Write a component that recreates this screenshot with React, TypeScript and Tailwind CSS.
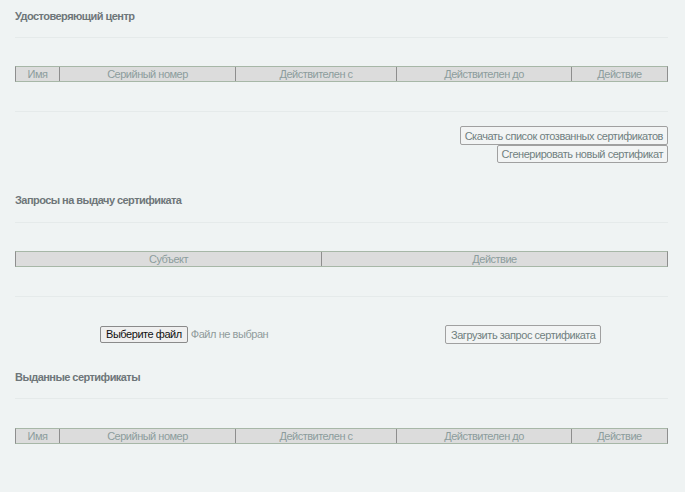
import React from 'react';

const font = { fontFamily: '"Liberation Sans", Arial, sans-serif' };

const Header = ({ cols }: { cols: { label: string; w: string }[] }) => (
  <div className="flex h-[16px] border border-t-[#a7b7a7] border-b-[#a7b7a7] border-l-[#8e8e8e] border-r-[#8e8e8e] bg-[#dcdcdc] text-[11px] leading-[14px] tracking-[-0.5px] text-[#8c9c9c]">
    {cols.map((c, i) => (
      <div
        key={c.label}
        className={`${c.w} text-center ${i > 0 ? 'border-l border-[#8e8e8e]' : ''}`}
      >
        {c.label}
      </div>
    ))}
  </div>
);

const Title = ({ children, className }: { children: React.ReactNode; className: string }) => (
  <div className={`${className} h-[14px] text-[11px] leading-[14px] tracking-[-0.55px] font-bold text-[#6e7679]`}>{children}</div>
);

const Line = ({ className }: { className: string }) => (
  <div className={`${className} border-t border-[#e5eaea]`} />
);

const Btn = ({ children, className }: { children: React.ReactNode; className: string }) => (
  <button
    className={`${className} border border-[#a0a0a0] bg-[#f2f4f4] px-[4px] text-[11px] leading-[14px] tracking-[-0.45px] text-[#708080] rounded-[2px]`}
  >
    {children}
  </button>
);

const certCols = [
  { label: 'Имя', w: 'w-[43px]' },
  { label: 'Серийный номер', w: 'w-[176px]' },
  { label: 'Действителен с', w: 'w-[161px]' },
  { label: 'Действителен до', w: 'w-[175px]' },
  { label: 'Действие', w: 'flex-1' },
];

export default function App() {
  return (
    <div className="min-h-[492px] w-full bg-[#eff3f3] px-[15px] pr-[17px]" style={font}>
      <Title className="translate-y-[9px]">Удостоверяющий центр</Title>
      <Line className="mt-[23px]" />
      <div className="mt-[28px]">
        <Header cols={certCols} />
      </div>
      <Line className="mt-[29px]" />
      <div className="mt-[14px] flex flex-col items-end">
        <Btn className="h-[19px]">Скачать список отозванных сертификатов</Btn>
        <Btn className="h-[18px]">Сгенерировать новый сертификат</Btn>
      </div>

      <Title className="mt-[30px]">Запросы на выдачу сертификата</Title>
      <Line className="mt-[15px]" />
      <div className="mt-[28px]">
        <Header
          cols={[
            { label: 'Субъект', w: 'w-[305px]' },
            { label: 'Действие', w: 'flex-1' },
          ]}
        />
      </div>
      <Line className="mt-[29px]" />
      <div className="mt-[28px] flex h-[19px] items-center">
        <div className="ml-[85px] flex w-[345px] items-center">
          <button className="h-[17px] border border-[#8a8a8a] bg-[#efefef] px-[5px] text-[11px] leading-[15px] tracking-[-0.45px] text-[#111] rounded-[2px]">
            Выберите файл
          </button>
          <span className="ml-[3px] text-[11px] tracking-[-0.45px] text-[#8f9b9b]">Файл не выбран</span>
        </div>
        <Btn className="h-[19px] px-[5px] text-[#7a8888]">Загрузить запрос сертификата</Btn>
      </div>

      <Title className="mt-[26px]">Выданные сертификаты</Title>
      <Line className="mt-[14px]" />
      <div className="mt-[29px]">
        <Header cols={certCols} />
      </div>
    </div>
  );
}
